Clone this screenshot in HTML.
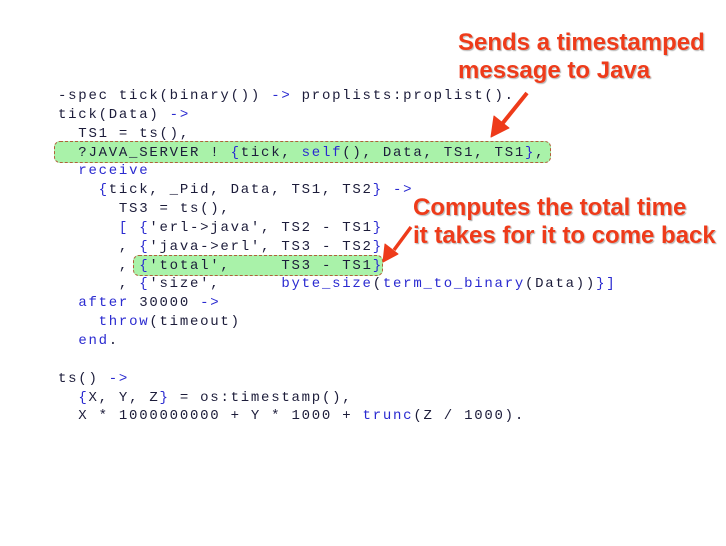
<!DOCTYPE html>
<html><head><meta charset="utf-8"><style>
html,body{margin:0;padding:0;background:#fff;width:726px;height:546px;overflow:hidden;position:relative}
pre{position:absolute;left:58px;top:87px;margin:0;font-family:"Liberation Mono",monospace;font-size:14px;letter-spacing:1.75px;line-height:18.85px;color:#1c1c3a}
.k{color:#2a2ad0}
.hl{position:absolute;background:#a9f2a9;border:1.3px dashed #b0603a;border-radius:6px}
.note{position:absolute;font-family:"Liberation Sans",sans-serif;font-weight:bold;font-size:24px;color:#ee3b1a;line-height:28px;text-shadow:0 0 2px #fff,1px 1px 1px #999;white-space:nowrap}
</style></head><body>
<div class="hl" style="left:54px;top:141px;width:495px;height:20px"></div>
<div class="hl" style="left:133px;top:255px;width:248px;height:19px"></div>
<pre>-spec tick(binary()) <span class="k">-&gt;</span> proplists:proplist().
tick(Data) <span class="k">-&gt;</span>
  TS1 = ts(),
  ?JAVA_SERVER ! <span class="k">{</span>tick, <span class="k">self</span>(), Data, TS1, TS1<span class="k">}</span>,
  <span class="k">receive</span>
    <span class="k">{</span>tick, _Pid, Data, TS1, TS2<span class="k">}</span> <span class="k">-&gt;</span>
      TS3 = ts(),
      <span class="k">[</span> <span class="k">{</span>'erl-&gt;java', TS2 - TS1<span class="k">}</span>
      , <span class="k">{</span>'java-&gt;erl', TS3 - TS2<span class="k">}</span>
      , <span class="k">{</span>'total',     TS3 - TS1<span class="k">}</span>
      , <span class="k">{</span>'size',      <span class="k">byte_size</span>(<span class="k">term_to_binary</span>(Data))<span class="k">}]</span>
  <span class="k">after</span> 30000 <span class="k">-&gt;</span>
    <span class="k">throw</span>(timeout)
  <span class="k">end</span>.

ts() <span class="k">-&gt;</span>
  <span class="k">{</span>X, Y, Z<span class="k">}</span> = os:timestamp(),
  X * 1000000000 + Y * 1000 + <span class="k">trunc</span>(Z / 1000).</pre>
<div class="note" style="left:458px;top:29px">Sends a timestamped<br>message to Java</div>
<div class="note" style="left:413px;top:194px">Computes the total time<br>it takes for it to come back</div>
<svg width="726" height="546" style="position:absolute;left:0;top:0">
<g fill="#ee3b1a" stroke="#ee3b1a" stroke-linejoin="round">
<line x1="527" y1="93" x2="502" y2="124" stroke-width="4"/>
<polygon points="491,137 494,116 509,128"/>
<line x1="411" y1="227" x2="394" y2="250" stroke-width="3.5"/>
<polygon points="383,262 385,244 398,254"/>
</g>
</svg>
</body></html>
